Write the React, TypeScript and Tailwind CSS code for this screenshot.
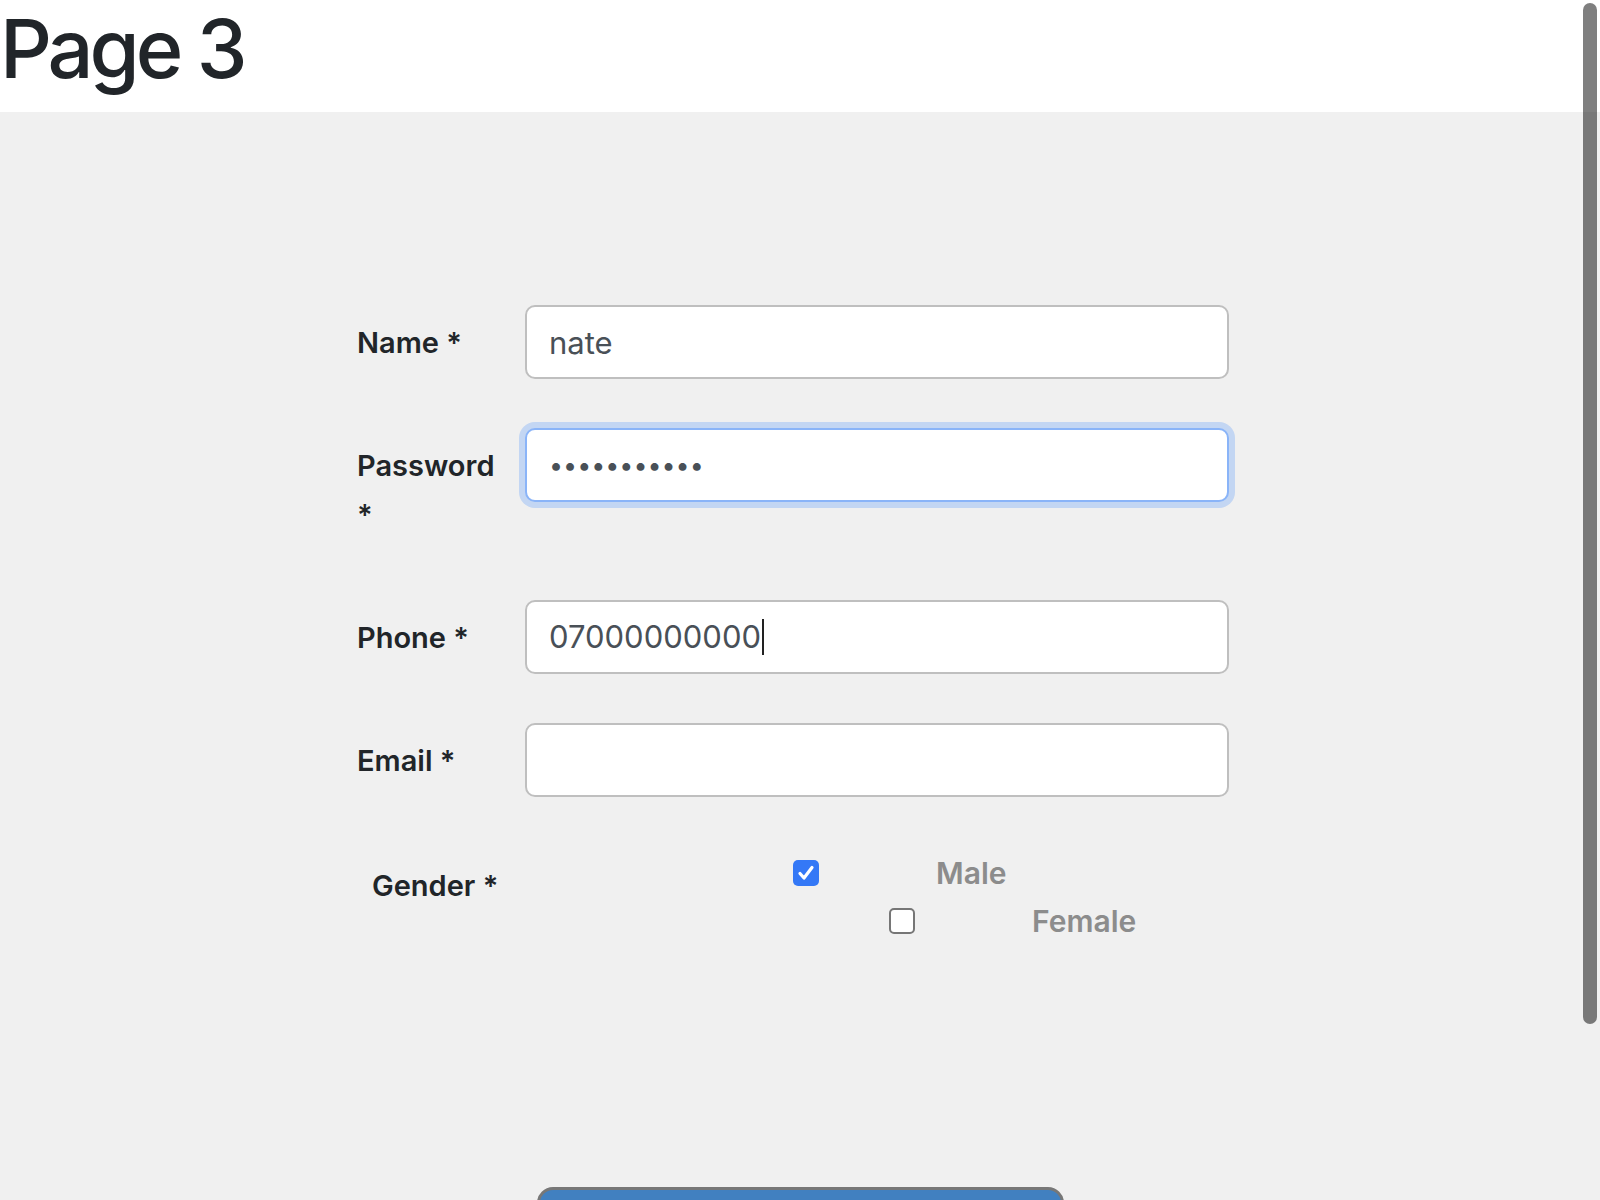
import React from "react";

function Label({ children }: { children: React.ReactNode }) {
  return (
    <label className="w-[168px] shrink-0 pt-[13px] pb-[12px] pr-[12px] text-[29px] leading-[49px] font-semibold text-[#212529]">
      {children}
    </label>
  );
}

const inputBase =
  "h-[74px] flex-1 rounded-[10px] border-2 bg-white px-[22px] text-[31px] text-[#495057] outline-none";

export default function App() {
  return (
    <div className="relative h-screen overflow-hidden bg-[#f0f0f0] font-['Inter',sans-serif]">
      <header className="h-[112px] bg-white">
        <h1 className="pt-[9px] text-[81px] leading-none font-medium tracking-[-0.05em] text-[#212529]">
          Page 3
        </h1>
      </header>

      <main className="pt-[193px]">
        <form className="ml-[357px] w-[872px] flex flex-col gap-[49px]">
          <div className="flex items-start">
            <Label>Name *</Label>
            <input className={`${inputBase} border-[#bfbfbf]`} defaultValue="nate" readOnly />
          </div>

          <div className="flex items-start">
            <Label>Password *</Label>
            <input
              type="password"
              className="h-[74px] flex-1 rounded-[10px] border-2 border-[#8ab4f8] bg-white px-[22px] text-[25px] text-[#495057] outline-none shadow-[0_0_0_6px_rgba(13,110,253,0.2)]"
              defaultValue="natepasswor"
              readOnly
            />
          </div>

          <div className="flex items-start">
            <Label>Phone *</Label>
            <div className="h-[74px] flex-1 rounded-[10px] border-2 border-[#bfbfbf] bg-white px-[22px] flex items-center text-[31px] text-[#495057]">
              <span>07000000000</span>
              <span className="ml-[1px] h-[36px] w-[2px] bg-[#222]" />
            </div>
          </div>

          <div className="flex items-start">
            <Label>Email *</Label>
            <input className={`${inputBase} border-[#bfbfbf]`} defaultValue="" readOnly />
          </div>
        </form>

        <div className="ml-[357px] mt-[63px] flex items-start">
          <div className="w-[436px] shrink-0 pl-[15px] pt-[2px] text-[29px] leading-[48px] font-semibold text-[#212529]">
            Gender *
          </div>
          <div className="flex flex-col gap-[22px]">
            <div className="flex items-center">
              <span className="flex h-[26px] w-[26px] items-center justify-center rounded-[5px] bg-[#3478f6]">
                <svg width="20" height="20" viewBox="0 0 20 20">
                  <path
                    d="M4 10.5 L8 15 L16 4.5"
                    fill="none"
                    stroke="white"
                    strokeWidth="3.2"
                    strokeLinecap="round"
                    strokeLinejoin="round"
                  />
                </svg>
              </span>
              <span className="ml-[117px] text-[30px] leading-[26px] font-semibold text-[#8c8c8c]">
                Male
              </span>
            </div>
            <div className="ml-[96px] flex items-center">
              <span className="h-[26px] w-[26px] rounded-[5px] border-2 border-[#767676] bg-white" />
              <span className="ml-[117px] text-[30px] leading-[26px] font-semibold text-[#8c8c8c]">
                Female
              </span>
            </div>
          </div>
        </div>

        <div className="mt-[253px] flex justify-center">
          <button
            type="button"
            className="h-[80px] w-[527px] rounded-[16px] border-[3px] border-[#777777] bg-[#4180c0]"
          />
        </div>
      </main>

      <div className="absolute right-[3px] top-[3px] h-[1021px] w-[14px] rounded-full bg-black/50" />
    </div>
  );
}
